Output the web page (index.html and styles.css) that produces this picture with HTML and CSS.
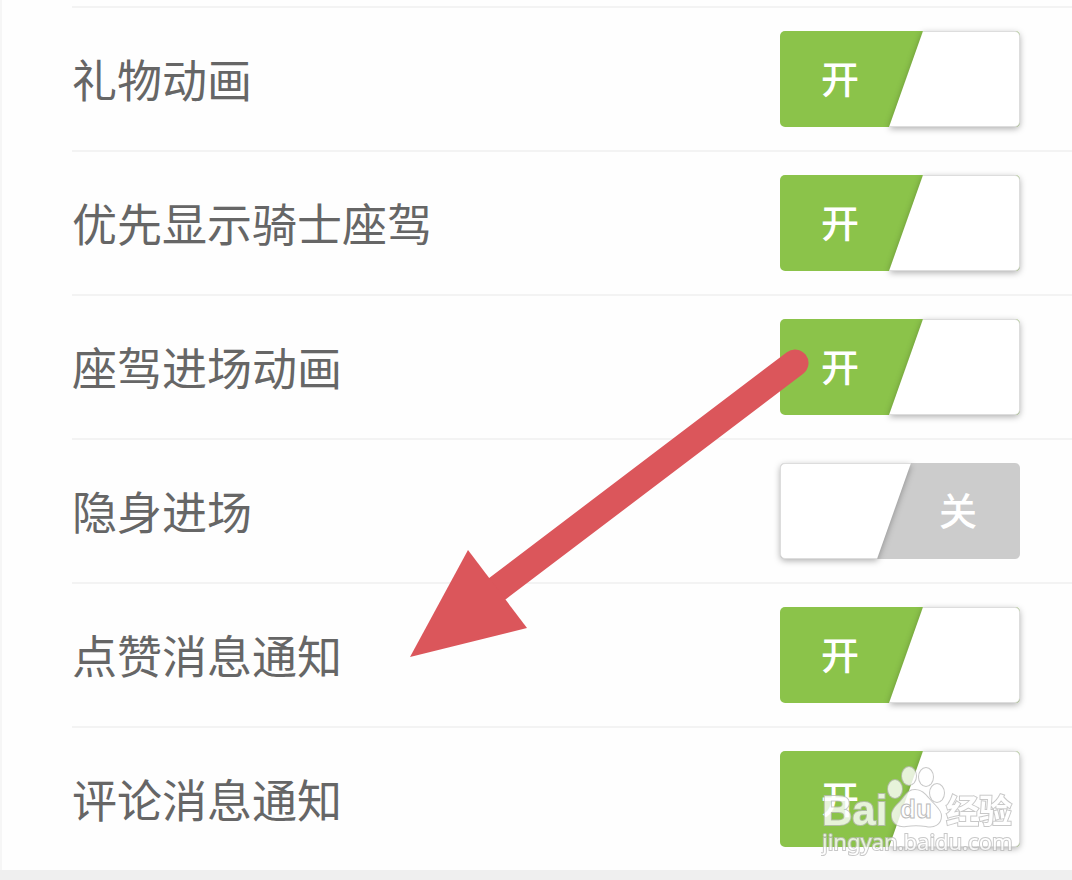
FILE: index.html
```html
<!DOCTYPE html>
<html lang="zh-CN">

<head>
  <meta charset="UTF-8">
  <meta name="viewport" content="width=device-width, initial-scale=1.0">
  <title>设置</title>
  <link rel="stylesheet" href="styles.css">
</head>

<body>

  <main class="settings">
    <div class="row">
      <label class="name" for="gift">礼物动画</label>
      <div class="switch">
        <input type="checkbox" id="gift" checked>
        <span class="text on">开</span>
        <span class="text off">关</span>
        <span class="knob-shadow"><span class="knob"></span></span>
      </div>
    </div>

    <div class="row">
      <label class="name" for="knight">优先显示骑士座驾</label>
      <div class="switch">
        <input type="checkbox" id="knight" checked>
        <span class="text on">开</span>
        <span class="text off">关</span>
        <span class="knob-shadow"><span class="knob"></span></span>
      </div>
    </div>

    <div class="row">
      <label class="name" for="car">座驾进场动画</label>
      <div class="switch">
        <input type="checkbox" id="car" checked>
        <span class="text on">开</span>
        <span class="text off">关</span>
        <span class="knob-shadow"><span class="knob"></span></span>
      </div>
    </div>

    <div class="row">
      <label class="name" for="hidden">隐身进场</label>
      <div class="switch">
        <input type="checkbox" id="hidden">
        <span class="text on">开</span>
        <span class="text off">关</span>
        <span class="knob-shadow"><span class="knob"></span></span>
      </div>
    </div>

    <div class="row">
      <label class="name" for="like">点赞消息通知</label>
      <div class="switch">
        <input type="checkbox" id="like" checked>
        <span class="text on">开</span>
        <span class="text off">关</span>
        <span class="knob-shadow"><span class="knob"></span></span>
      </div>
    </div>

    <div class="row">
      <label class="name" for="comment">评论消息通知</label>
      <div class="switch">
        <input type="checkbox" id="comment" checked>
        <span class="text on">开</span>
        <span class="text off">关</span>
        <span class="knob-shadow"><span class="knob"></span></span>
      </div>
    </div>

    <svg class="arrow" width="420" height="320" viewBox="0 0 420 320" aria-hidden="true">
      <path d="M395 23 L97 249" stroke="#db565b" stroke-width="27" stroke-linecap="round" />
      <path d="M10 317 L68 210 L127 288 Z" fill="#db565b" />
    </svg>

    <svg class="watermark" width="200" height="100" viewBox="0 0 200 100">
      <g class="mark">
        <text class="brand" x="1" y="65">Bai</text>
        <ellipse cx="74" cy="29" rx="7" ry="9" />
        <ellipse cx="88" cy="16" rx="7" ry="9" />
        <ellipse cx="105" cy="17" rx="7" ry="9" />
        <ellipse cx="116" cy="33" rx="7" ry="9" />
        <path d="M94 30 C86 30 84 37 79 42 C74 47 70 51 71 57 C72 64 78 67 85 66 C92 65 98 65 105 66 C113 68 120 64 120 56 C120 50 114 46 110 41 C105 36 102 30 94 30 Z" />
        <text class="zh" x="125" y="63">经验</text>
        <text class="site" x="1" y="90">jingyan.baidu.com</text>
      </g>
      <text class="du" x="79" y="58">du</text>
    </svg>
  </main>

</body>

</html>
```
FILE: styles.css
```css
body {
  margin: 0;
  min-height: 100vh;
  background-color: #efefef;
  font-family: "Noto Sans CJK SC", sans-serif;
}

.settings {
  position: relative;
  padding-top: 6px;
  padding-left: 70px;
  border-left: 2px solid #f6f6f6;
  background-color: #fefefe;
}

.row {
  display: flex;
  align-items: center;
  justify-content: space-between;
  box-sizing: border-box;
  height: 144px;
  padding-right: 52px;
  border-top: 2px solid #f3f3f3;
}

.name {
  color: #666;
  font-size: 45px;
  line-height: 64px;
}

.switch {
  position: relative;
  width: 240px;
  height: 96px;
}

.switch input {
  appearance: none;
  display: block;
  width: 100%;
  height: 100%;
  margin: 0;
  border-radius: 5px;
  background-color: #ccc;
  cursor: pointer;
}

.switch input:checked {
  background-color: #8bc34a;
}

.text {
  position: absolute;
  top: 0;
  color: white;
  font-size: 38px;
  font-weight: 500;
  line-height: 92px;
  pointer-events: none;
}

.on {
  display: none;
  left: 41px;
}

.off {
  right: 43px;
}

input:checked ~ .on {
  display: block;
}

input:checked ~ .off {
  display: none;
}

.knob-shadow {
  position: absolute;
  inset: 0;
  filter: drop-shadow(0 2px 3px rgba(0, 0, 0, 0.3));
  pointer-events: none;
}

.knob {
  display: block;
  box-sizing: border-box;
  height: 100%;
  border: 1px solid #ddd;
  border-radius: 5px;
  background-color: white;
  clip-path: polygon(0 0, 131px 0, 97px 100%, 0 100%);
}

input:checked ~ .knob-shadow .knob {
  clip-path: polygon(143px 0, 100% 0, 100% 100%, 109px 100%);
}

.arrow {
  position: absolute;
  top: 340px;
  right: 252px;
  fill: none;
  pointer-events: none;
}

.watermark {
  position: absolute;
  top: 760px;
  right: 51px;
  pointer-events: none;
}

.mark {
  fill: white;
  stroke: #bbb;
  stroke-width: 2px;
  paint-order: stroke;
  opacity: 0.8;
}

.brand {
  font: bold 42px "Liberation Sans", sans-serif;
}

.zh {
  font-size: 33px;
  font-weight: bold;
}

.site {
  font: 22px "Noto Sans", sans-serif;
}

.du {
  fill: white;
  stroke: #bbb;
  stroke-width: 1px;
  font: bold 26px "Liberation Sans", sans-serif;
}
```
